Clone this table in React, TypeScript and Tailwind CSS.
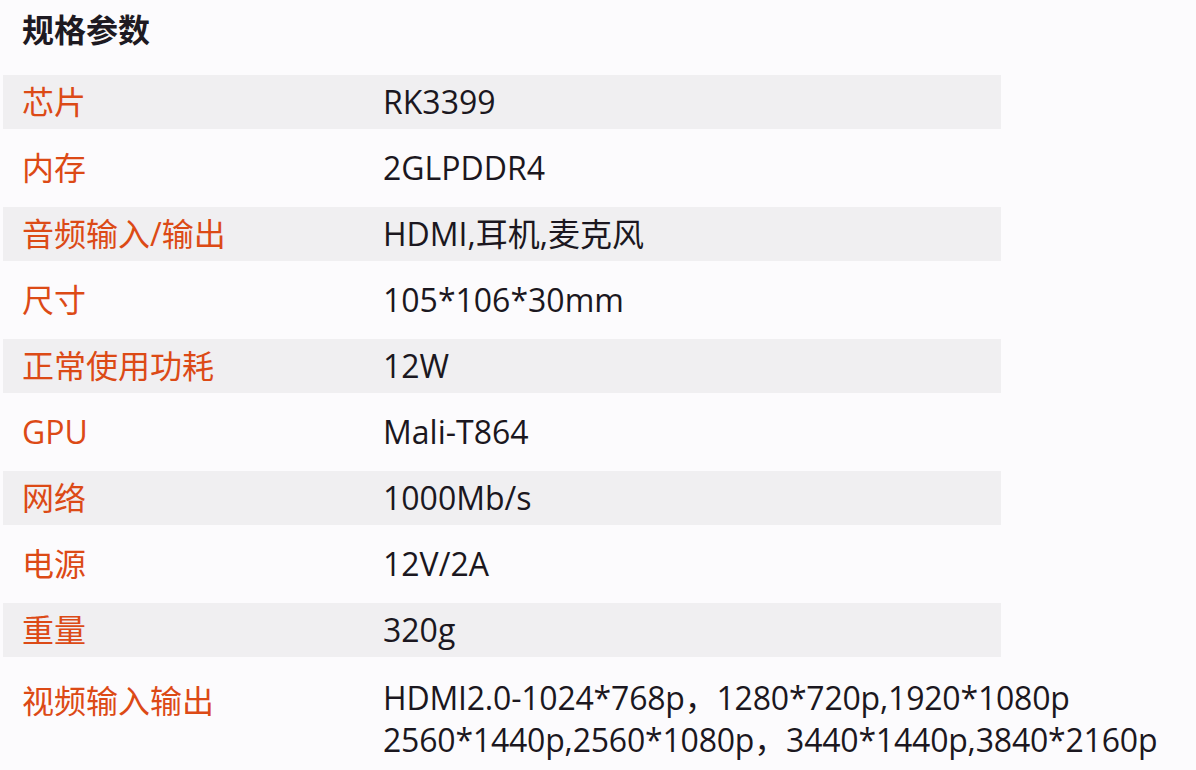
import React from "react";

const rows: { label: string; value: string[] }[] = [
  { label: "芯片", value: ["RK3399"] },
  { label: "内存", value: ["2GLPDDR4"] },
  { label: "音频输入/输出", value: ["HDMI,耳机,麦克风"] },
  { label: "尺寸", value: ["105*106*30mm"] },
  { label: "正常使用功耗", value: ["12W"] },
  { label: "GPU", value: ["Mali-T864"] },
  { label: "网络", value: ["1000Mb/s"] },
  { label: "电源", value: ["12V/2A"] },
  { label: "重量", value: ["320g"] },
];

export default function App() {
  return (
    <div
      className="w-[1196px] h-[770px] overflow-hidden bg-[#fcfbfd] text-[32px]"
      style={{ fontFamily: '"Open Sans", "Noto Sans CJK SC", sans-serif' }}
    >
      <div className="h-[75px] pt-[10px] pl-[22px] leading-[40px] font-bold text-[#1e1a22]">
        规格参数
      </div>
      <div className="flex flex-col gap-[12px] pl-[3px]">
        {rows.map((r, i) => (
          <div
            key={r.label}
            className={`w-[998px] h-[54px] flex items-center ${i % 2 === 0 ? "bg-[#f0eff1]" : ""}`}
          >
            <div className="w-[380px] shrink-0 pl-[19px] text-[#dc4a16] leading-[40px]">{r.label}</div>
            <div className="text-[#1b1720] leading-[40px] whitespace-nowrap">{r.value[0]}</div>
          </div>
        ))}
        <div className="w-[998px] flex items-start pt-[8px]">
          <div className="w-[380px] shrink-0 pl-[19px] text-[#dc4a16] leading-[42px] pt-[3px]">视频输入输出</div>
          <div className="text-[#1b1720] leading-[42px] whitespace-nowrap tracking-[-0.2px]">
            <div>HDMI2.0-1024*768p，1280*720p,1920*1080p</div>
            <div>2560*1440p,2560*1080p，3440*1440p,3840*2160p</div>
          </div>
        </div>
      </div>
    </div>
  );
}
